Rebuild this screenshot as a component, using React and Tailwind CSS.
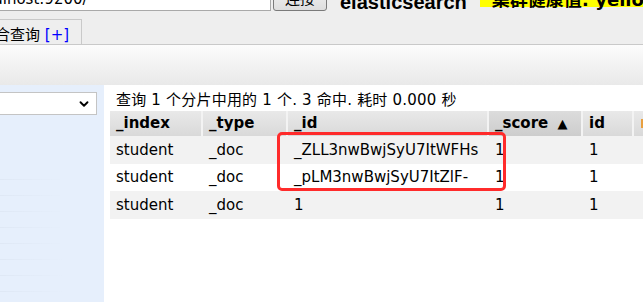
import { ChevronDown } from 'lucide-react';

const cols = [
  { key: '_index', w: 'w-[93px]' },
  { key: '_type', w: 'w-[85px]' },
  { key: '_id', w: 'w-[201px]' },
  { key: '_score', w: 'w-[94px]' },
  { key: 'id', w: 'w-[51px]' },
  { key: 'extra', w: 'w-[120px]' },
];

const rows = [
  ['student', '_doc', '_ZLL3nwBwjSyU7ItWFHs', '1', '1', ''],
  ['student', '_doc', '_pLM3nwBwjSyU7ItZlF-', '1', '1', ''],
  ['student', '_doc', '1', '1', '1', ''],
];

const font = { fontFamily: '"DejaVu Sans", "Noto Sans CJK SC", sans-serif' };

export default function App() {
  return (
    <div className="w-[643px] h-[302px] overflow-hidden bg-white text-black" style={font}>
      {/* top connect bar, cut off by the window */}
      <div className="h-[12px] flex items-end overflow-hidden bg-[#eeeeee]">
        <div className="shrink-0 w-[273px] h-[28px] mb-[1px] -ml-[2px] bg-white border border-[#a9a9a9] flex items-end overflow-hidden">
          <span className="text-[15px] leading-[18px] pb-[2px] -ml-[73px] whitespace-nowrap">http://localhost:9200/</span>
        </div>
        <button className="shrink-0 ml-[2px] w-[54px] h-[28px] mb-[1px] border border-[#7a7a7a] rounded-[3px] bg-linear-to-b from-[#f6f6f6] to-[#dedede] flex items-end justify-center">
          <span className="text-[15px] leading-[18px] pb-[2px]">连接</span>
        </button>
        <span className="shrink-0 ml-[13px] mb-[0px] text-[20px] leading-[20px] font-bold whitespace-nowrap" style={{ fontFamily: '"Liberation Sans", Arial, sans-serif' }}>
          elasticsearch
        </span>
        <div className="shrink-0 ml-[13px] w-[200px] h-[30px] mb-[5px] bg-[#ffff00] flex items-end pl-[12px]">
          <span className="text-[18px] leading-[18px] font-bold whitespace-nowrap -mb-[2px]">集群健康值: yellow (5 of 10)</span>
        </div>
      </div>

      {/* tabs */}
      <div className="h-[33px] flex items-end bg-[#eeeeee] border-b border-[#c9c9c9]">
        <div className="-ml-[20px] h-[25px] pr-[12px] border-t border-r border-[#c9c9c9] flex items-end">
          <span className="text-[15px] leading-[18px] whitespace-nowrap">
            组合查询 <span className="text-[#0000ff]">[+]</span>
          </span>
        </div>
      </div>

      {/* toolbar */}
      <div className="h-[40px] bg-linear-to-b from-[#fcfcfc] to-[#e9e9e9]" />

      <div className="flex h-[217px]">
        {/* sidebar */}
        <div className="w-[104px] shrink-0 bg-[#e6effc] flex flex-col">
          <div className="mt-[7px] -ml-[2px] w-[99px] h-[23px] bg-white border border-[#c4c4c4] flex items-center justify-end pr-[5px]">
            <ChevronDown size={14} strokeWidth={3.2} className="text-black" />
          </div>
          <div className="mt-[49px] flex flex-col">
            {Array.from({ length: 8 }).map((_, i) => (
              <div key={i} className="h-[16px] flex items-end">
                <div className="h-px w-[64px] bg-linear-to-r from-[#dfe8f5] to-transparent" />
              </div>
            ))}
          </div>
        </div>

        {/* results */}
        <div className="flex-1 min-w-0">
          <div className="h-[26px] pt-[4px] pl-[12px] text-[15px] leading-[22px] whitespace-nowrap tracking-[0.2px]">
            查询 1 个分片中用的 1 个. 3 命中. 耗时 0.000 秒
          </div>
          <div className="relative ml-[6px]">
            <div className="flex h-[25px]">
              {cols.map((c) => (
                <div
                  key={c.key}
                  className={`${c.w} shrink-0 h-full flex items-center pl-[6px] text-[15px] font-bold whitespace-nowrap border-r-2 border-[#f3f3f3] ${
                    c.key === '_score'
                      ? 'bg-linear-to-b from-[#dcdcdc] to-[#cdcdcd]'
                      : 'bg-linear-to-b from-[#e9e9e9] to-[#d9d9d9]'
                  }`}
                >
                  {c.key === '_score' && (
                    <span>
                      _score <span className="text-[13px] ml-[4px]">▲</span>
                    </span>
                  )}
                  {c.key === 'extra' && <span className="ml-[1px] w-[3px] h-[9px] bg-[#e8a040]" />}
                  {c.key !== '_score' && c.key !== 'extra' && c.key}
                </div>
              ))}
            </div>
            {rows.map((r, i) => (
              <div key={i} className={`flex h-[27.67px] ${i % 2 === 0 ? 'bg-[#f2f2f2]' : 'bg-white'}`}>
                {r.map((v, j) => (
                  <div key={j} className={`${cols[j].w} shrink-0 flex items-center pl-[6px] text-[15px] whitespace-nowrap`}>
                    {v}
                  </div>
                ))}
              </div>
            ))}
            <div className="absolute left-[167px] top-[21px] w-[229px] h-[59px] border-[3px] border-[#ff2b2b] rounded-[5px]" />
          </div>
        </div>
      </div>
    </div>
  );
}
